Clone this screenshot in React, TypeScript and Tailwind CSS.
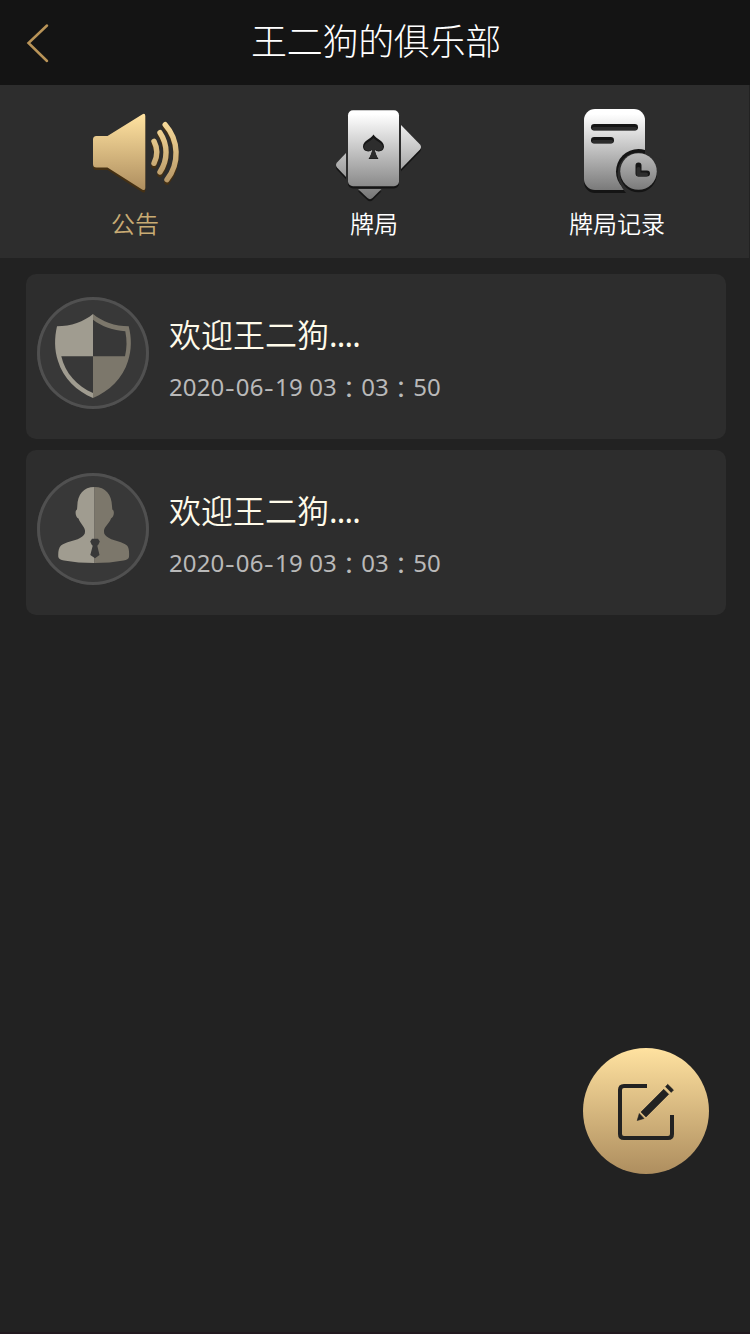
import React from "react";

const cjk = "font-['Noto_Sans_CJK_SC','Noto_Sans',sans-serif]";

function SpeakerIcon() {
  const shape = (
    <>
      <path
        stroke="none"
        d="M96.500 136H107.500L142.500 114.200Q145.300 113 145.300 116V188Q145.300 191 142.500 189.700L107.500 167.500H96.500Q93 167.500 93 164V139.500Q93 136 96.500 136Z"
      />
      <g fill="none" strokeWidth="5.400" strokeLinecap="round">
        <path d="M154 141.300A24 24 0 0 1 154 163.300" />
        <path d="M160 132.700A35 35 0 0 1 160 172" />
        <path d="M165.200 124.700A43 43 0 0 1 167 179.700" />
      </g>
    </>
  );
  return (
    <svg className="size-[100px]" viewBox="85 105 100 100">
      <defs>
        <linearGradient id="gold" gradientUnits="userSpaceOnUse" x1="0" y1="115" x2="0" y2="190">
          <stop offset="0" stopColor="#ffe2a0" />
          <stop offset="1" stopColor="#ae8e5f" />
        </linearGradient>
      </defs>
      <g fill="#443014" stroke="#443014" transform="translate(0 2.500)">{shape}</g>
      <g fill="url(#gold)" stroke="url(#gold)">{shape}</g>
    </svg>
  );
}

function CardsIcon() {
  const shape = (
    <>
      <rect x="348" y="110.300" width="51" height="76" rx="5" />
      <path d="M401 125L420 144.500Q422 147 420 149.500L401 169Z" />
      <path d="M346 153L337 162.500Q335 165 337 167.500L346 177Z" />
      <path d="M358 189H381.500L372.500 198Q370 200.300 367.500 198Z" />
    </>
  );
  return (
    <svg className="size-[100px]" viewBox="324 105 100 100">
      <defs>
        <linearGradient id="silver" gradientUnits="userSpaceOnUse" x1="0" y1="114" x2="0" y2="200">
          <stop offset="0" stopColor="#ffffff" />
          <stop offset="1" stopColor="#747474" />
        </linearGradient>
      </defs>
      <g fill="#141414" transform="translate(0 2.200)">{shape}</g>
      <g fill="url(#silver)">{shape}</g>
      <path fill="#161616" d="M373.500 134.500C376 139 384 140.500 384 146.500C384 151.500 377.500 153 374.500 149.500C375 153 376.500 156 378.500 159H368.500C370.500 156 372 153 372.500 149.500C369.500 153 363 151.500 363 146.500C363 140.500 371 139 373.500 134.500Z" />
      <path fill="#2d2d2d" d="M373.500 138C377 142 383 143 383 147.500C382 151.500 377 151.500 374.500 149.500L377.500 158.500H369.500L372.500 149.500C370 151.500 365 151.500 364 147.500C364 143 370 142 373.500 138Z" />
    </svg>
  );
}

function RecordIcon() {
  return (
    <svg className="size-[100px]" viewBox="567 105 100 100">
      <defs>
        <linearGradient id="sheet" gradientUnits="userSpaceOnUse" x1="0" y1="114" x2="0" y2="190">
          <stop offset="0" stopColor="#ffffff" />
          <stop offset="1" stopColor="#7a7a7a" />
        </linearGradient>
        <clipPath id="sheetClip">
          <rect x="584" y="109" width="61" height="84" rx="11" />
        </clipPath>
      </defs>
      <rect x="584" y="111.500" width="61" height="81.500" rx="11" fill="#141414" />
      <rect x="584" y="109" width="61" height="81" rx="11" fill="url(#sheet)" />
      <rect x="591" y="124" width="47" height="6.500" rx="3.200" fill="#141414" />
      <rect x="592" y="127" width="45" height="3.200" rx="1.500" fill="#2b2b2b" />
      <rect x="591" y="137" width="23" height="6.500" rx="3.200" fill="#141414" />
      <rect x="592" y="140" width="21" height="3.200" rx="1.500" fill="#2b2b2b" />
      <g clipPath="url(#sheetClip)">
        <circle cx="638.500" cy="171.500" r="22.500" fill="#141414" />
        <circle cx="638.500" cy="173.500" r="21" fill="#2d2d2d" />
      </g>
      <path d="M645.500 153L662 160V194H627Q621 188 619.500 180Z" fill="#2d2d2d" />
      <circle cx="638.500" cy="174" r="18.300" fill="#141414" />
      <circle cx="638.500" cy="171.500" r="18.300" fill="url(#sheet)" />
      <path d="M638.500 165.500V173.500H647" fill="none" stroke="#161616" strokeWidth="6" strokeLinecap="round" strokeLinejoin="round" />
      <path d="M638.500 169V174.500H646" fill="none" stroke="#2d2d2d" strokeWidth="4" strokeLinecap="round" strokeLinejoin="round" />
    </svg>
  );
}

function ShieldIcon() {
  return (
    <svg className="size-full" viewBox="37 297 112 112">
      <path fill="#a09c90" d="M93 314C84 321.500 71 326.300 57 326.300C54.300 338 54.300 350 58 361C63 378 77 391.500 93 398Z" />
      <path fill="#7c776b" d="M93 314C102 321.500 115 326.300 128.700 326.300C131.700 338 131.700 350 128 361C123 378 109 391.500 93 398Z" />
      <path fill="#383838" d="M93 319.700C102 326.500 113 330.500 125.300 331.200C127 340 127 348 125 356.200H93Z" />
      <path fill="#383838" d="M61.300 356.200H93V393C77 386 65 373 61.300 356.200Z" />
    </svg>
  );
}

function PersonIcon() {
  return (
    <svg className="size-full" viewBox="37 473 112 112">
      <path fill="#a09c90" d="M94.500 487C83.500 487 77.500 494.500 77.300 506L77 509.500C74.500 510.500 75.500 517.500 78.500 518.500C80 523 84.500 526.500 85 530.500C85.300 534 84 535.500 80 538C74 541.500 66 541.500 61 545.500C58.500 548 58 552.500 58.300 557Q59 559.500 64 560.500Q78 563 94.500 563Z" />
      <path fill="#7c776b" d="M94.500 487C105.500 487 111.800 494.500 112 506L112.300 509.500C115 510.500 114 517.500 111 518.500C109.500 523 104.500 526.500 104 530.500C103.700 534 105 535.500 109 538C115 541.500 122.500 541.500 127 545.500C129.200 548 129.300 552.500 129 557Q128.500 559.500 123.500 560.500Q110 563 94.500 563Z" />
      <path fill="#383838" d="M92 538.800H98L99.800 541.500L98.300 544.700L97.300 545.700L99.500 555L95 558.300L90.300 555L92.700 545.700L91.700 544.700L90.200 541.500Z" />
    </svg>
  );
}

function EditIcon() {
  return (
    <svg className="size-full" viewBox="583 1048 126 126">
      <path fill="none" stroke="#222222" strokeWidth="4" d="M647 1086H624Q620 1086 620 1090V1134Q620 1138 624 1138H668Q672 1138 672 1134V1115" />
      <path fill="#222222" stroke="#222222" strokeWidth="0.600" d="M663.700 1089.300L668.700 1094.300L646 1117L641 1112ZM665.500 1086.700L667.700 1084.300L673.500 1090L671.200 1092.400ZM639.300 1113.500L644 1118.500L637.200 1120.500Z" />
    </svg>
  );
}

function Hyphen() {
  return <span className="w-[11.500px] scale-x-125 text-center">-</span>;
}

function Colon() {
  return <span className="relative top-px w-[24.500px] text-center font-['Noto_Sans_CJK_TC']" lang="zh-TW">：</span>;
}

function Notice({ icon }: { icon: React.ReactNode }) {
  return (
    <article className="flex h-[165px] rounded-[10px] bg-[#2d2d2d] pl-[11px] pt-[23px]">
      <div className="size-28 shrink-0 rounded-full bg-[#383838] shadow-[inset_0_0_0_3px_#505050]">{icon}</div>
      <div className="pl-5">
        <h2 className="mt-[13px] h-[46px] whitespace-nowrap text-[32px] font-[350] leading-[46px] text-[#fffbea]">
          欢迎王二狗<span className="font-['Noto_Sans'] font-normal tracking-[-0.8px]">....</span>
        </h2>
        <p className="mt-3.5 flex h-[34px] whitespace-pre font-['Noto_Sans','Noto_Sans_CJK_TC',sans-serif] text-2xl leading-[34px] text-[#b9b9b9]">
          <span className="tracking-[0.1px]">2020</span>
          <Hyphen />
          <span className="tracking-[0.1px]">06</span>
          <Hyphen />
          <span className="tracking-[0.2px]">19 </span>
          <span>03</span>
          <Colon />
          <span>03</span>
          <Colon />
          <span>50</span>
        </p>
      </div>
    </article>
  );
}

export default function App() {
  return (
    <main className={`relative flex h-[1334px] w-[750px] flex-col overflow-hidden border-b-2 border-[#21191f] bg-[#222222] ${cjk}`} lang="zh-CN">
      <header className="grid h-[85px] shrink-0 grid-cols-[100px_1fr_100px] bg-[#141414]">
        <button className="flex items-start pl-6 pt-5" aria-label="返回">
          <svg className="h-11 w-7" viewBox="24 20 28 44" fill="none" stroke="#b99458" strokeWidth="2.500" strokeLinecap="round">
            <path d="M47 25.500L28.500 43L47 61" />
          </svg>
        </button>
        <h1 className="pl-[2px] text-center text-[36px] font-light leading-[78px] tracking-[-0.3px] text-white">王二狗的俱乐部</h1>
      </header>
      <nav className="mr-px flex h-[173px] shrink-0 bg-[#2d2d2d] pt-5 text-2xl font-[350] leading-[35px] text-white">
        <button className="flex w-[270px] flex-col items-center text-[#c8ab74]">
          <SpeakerIcon />
          <span>公告</span>
        </button>
        <button className="flex w-[208px] flex-col items-center">
          <CardsIcon />
          <span>牌局</span>
        </button>
        <button className="flex w-[271px] flex-col items-center pl-[7px]">
          <RecordIcon />
          <span>牌局记录</span>
        </button>
      </nav>
      <section className="flex flex-col gap-[11px] pl-[26px] pr-6 pt-4">
        <Notice icon={<ShieldIcon />} />
        <Notice icon={<PersonIcon />} />
      </section>
      <button className="absolute left-[583px] top-[1048px] size-[126px] rounded-full bg-linear-to-b from-[#ffe2a0] to-[#ae8e5f]" aria-label="编辑">
        <EditIcon />
      </button>
    </main>
  );
}
